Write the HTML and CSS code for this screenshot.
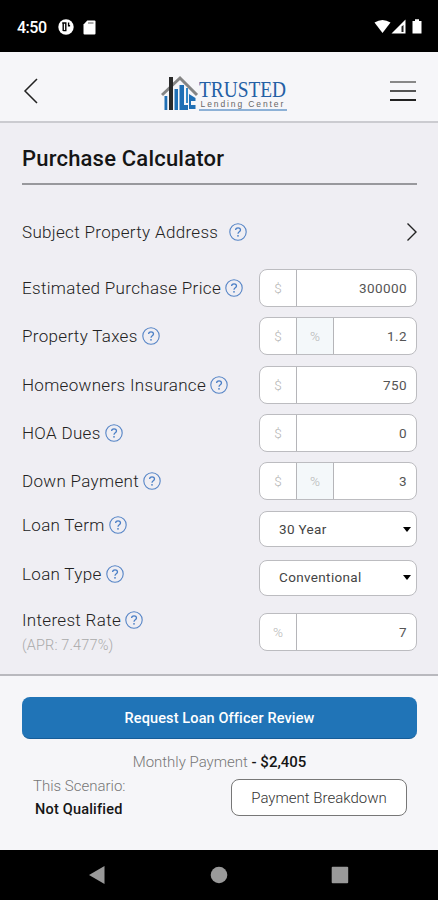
FILE: index.html
```html
<!DOCTYPE html>
<html lang="en">
<head>
<meta charset="utf-8">
<title>Purchase Calculator</title>
<link rel="stylesheet" href="styles.css">
</head>
<body>
<svg class="defs" width="0" height="0">
  <symbol id="help" viewBox="0 0 18 18">
    <circle cx="9" cy="9" r="8.2" fill="none" stroke="#5584c6" stroke-width="1.1"/>
    <path d="M6.6 7.1C6.6 4.2 11.5 4.1 11.5 7C11.5 8.8 9 8.8 9 10.7" fill="none" stroke="#4b7fc6" stroke-width="1.3"/>
    <circle cx="9" cy="12.8" r=".9" fill="#4b7fc6"/>
  </symbol>
</svg>
<div class="status">
  <span class="clock">4:50</span>
  <svg class="app-dot" width="16" height="16" viewBox="0 0 16 16"><circle cx="8" cy="8" r="7.7" fill="#fff"/><path d="M5.200 3.500v8.500M4.200 4h3.600v7.600H5.200M10.600 3.500v3.300h1.500" fill="none" stroke="#000" stroke-width="1.400"/></svg>
  <svg class="sd" width="13" height="15" viewBox="0 0 13 15"><path d="M4.3.5H11.500Q12.500.5 12.500 1.500V13.500Q12.500 14.500 11.500 14.500H1.500Q.5 14.500.5 13.500V4.500Z" fill="#fff"/><path d="M5 3h5.500" stroke="#777" stroke-width="1.200"/></svg>
  <svg class="signals" width="49" height="16" viewBox="0 0 49 16"><path d="M.5 3.500Q8.500-1.500 16.500 3.500L8.500 14Z" fill="#fff"/><path d="M17.500 14.500L31.500.5V14.500Z" fill="#fff"/><path d="M27.500 7.500V13h2V6z" fill="#222"/><path d="M38.500 2h2.500V.3h4V2h2.500v12.500h-9z" fill="#fff"/></svg>
</div>
<header class="bar">
  <svg class="back" width="16" height="28" viewBox="0 0 16 28"><path d="M14 2L2 14L14 26" fill="none" stroke="#222" stroke-width="1.500"/></svg>
  <div class="logo">
    <svg width="38" height="36" viewBox="0 0 38 36">
      <path d="M3.500 21h2.800v14H3.500zM13.500 14h3.500v21h-3.500zM18.500 10h4.500v20h4v5h-8.500zM28 19L34.500 23V26H30V30H34.500V34H28Z" fill="#1f6fb5"/>
      <path d="M9 18h2v17H9zM25 13h2v15h-2z" fill="#3487c5"/>
      <path d="M1 20L19 3L36 20" fill="none" stroke="#858585" stroke-width="3"/>
      <path d="M8 2H12V35H8Z" fill="#292929"/>
    </svg>
    <div class="wordmark"><span class="trusted">TRUSTED</span><span class="lending">Lending Center</span></div>
  </div>
  <div class="menu"><i></i><i></i><i></i></div>
</header>
<main class="page">
  <h1><span>Purchase Calculator</span></h1>
  <div class="address"><span class="t-address">Subject Property Address</span><svg class="help"><use href="#help"/></svg>
    <svg class="next" width="12" height="20" viewBox="0 0 12 20"><path d="M1.500 1.500L10 10L1.500 18.500" fill="none" stroke="#222" stroke-width="1.400"/></svg></div>
  <form class="fields">
    <div class="row"><label>Estimated Purchase Price</label><svg class="help"><use href="#help"/></svg><div class="box"><span class="unit">$</span><span class="value">300000</span></div></div>
    <div class="row"><label>Property Taxes</label><svg class="help"><use href="#help"/></svg><div class="box"><span class="unit">$</span><span class="unit on">%</span><span class="value">1.2</span></div></div>
    <div class="row"><label>Homeowners Insurance</label><svg class="help"><use href="#help"/></svg><div class="box"><span class="unit">$</span><span class="value">750</span></div></div>
    <div class="row"><label>HOA Dues</label><svg class="help"><use href="#help"/></svg><div class="box"><span class="unit">$</span><span class="value">0</span></div></div>
    <div class="row"><label>Down Payment</label><svg class="help"><use href="#help"/></svg><div class="box"><span class="unit">$</span><span class="unit on">%</span><span class="value">3</span></div></div>
    <div class="row pick"><div class="name"><label>Loan Term</label><svg class="help"><use href="#help"/></svg></div><div class="box select"><span>30 Year</span><i class="caret"></i></div></div>
    <div class="row pick"><div class="name"><label>Loan Type</label><svg class="help"><use href="#help"/></svg></div><div class="box select"><span>Conventional</span><i class="caret"></i></div></div>
    <div class="row rate"><div class="stack"><div class="name"><label>Interest Rate</label><svg class="help"><use href="#help"/></svg></div><span class="apr">(APR: 7.477%)</span></div><div class="box"><span class="unit">%</span><span class="value">7</span></div></div>
  </form>
</main>
<footer class="summary">
  <div class="request"><span>Request Loan Officer Review</span></div>
  <p class="monthly">Monthly Payment <b>- $2,405</b></p>
  <div class="result">
    <div class="scenario"><span class="s-label">This Scenario:</span><b>Not Qualified</b></div>
    <div class="breakdown"><span>Payment Breakdown</span></div>
  </div>
</footer>
<div class="system">
  <svg width="18" height="20" viewBox="0 0 18 20"><path d="M1 10L16.500 1V19Z" fill="#999"/></svg>
  <svg width="18" height="18" viewBox="0 0 18 18"><circle cx="9" cy="9" r="8.300" fill="#999"/></svg>
  <svg width="18" height="18" viewBox="0 0 18 18"><rect x=".7" y=".7" width="16.500" height="16.500" rx="1" fill="#999"/></svg>
</div>
</body>
</html>
```
FILE: styles.css
```css
* { box-sizing: border-box; }
body { margin: 0; width: 438px; height: 900px; overflow: hidden; display: flex; flex-direction: column; background: #efeef3; color: #333; font-family: Roboto, sans-serif; }
svg { display: block; flex: none; }
.defs { position: absolute; }
.status { height: 52px; flex: none; background: #000; color: #fff; display: flex; align-items: center; padding: 2px 14px 0 17px; }
.clock { font-size: 16px; font-weight: 500; width: 41px; letter-spacing: -.5px; }
.sd { margin-left: 9px; }
.signals { margin-left: auto; margin-right: 1px; }
.bar { height: 71px; flex: none; background: #f6f6f9; border-bottom: 2px solid #cbcbd0; display: flex; align-items: center; justify-content: space-between; padding: 8px 22px 0 23px; }
.logo { display: flex; width: 126px; height: 36px; margin: 4px 0 0 18px; }
.wordmark { width: 88px; margin-left: 0; padding-top: 5px; border-bottom: 2px solid #8db1d6; height: 36px; white-space: nowrap; }
.trusted { display: block; width: 104px; font: 22.500px/19px "Liberation Serif", serif; color: #245fa5; transform: scaleX(.86); transform-origin: 0 0; }
.lending { display: block; font: 8.500px/9px "Liberation Sans", sans-serif; color: #666; letter-spacing: 1.9px; margin: 1px 0 0 2px; }
.menu { width: 26px; display: grid; gap: 7px; }
.menu i { height: 2px; background: #222; }
.menu i:first-child { background: #888; }
.menu i:nth-child(2) { background: #555; }
.page { height: 551px; flex: none; padding: 0 21px 0 22px; }
h1 { margin: 0; height: 62px; border-bottom: 2px solid #98989c; font-size: 22px; line-height: 71px; font-weight: 500; color: #151515; letter-spacing: .2px; }
.address { height: 84px; padding-top: 10px; display: flex; align-items: center; font-size: 17px; font-weight: 300; }
.address .help { margin-left: 11px; }
.next { margin-left: auto; margin-right: -1px; }
.help { width: 18px; height: 18px; margin-left: 4px; }
.fields { display: grid; gap: 10.3px; }
.row { height: 38px; display: flex; align-items: center; font-size: 17px; }
label, .t-address { font-weight: 300; letter-spacing: .32px; white-space: nowrap; color: #222; }
.box { width: 158px; height: 38px; margin-left: auto; border: 1.500px solid #bcbcc0; border-radius: 8px; background: #fff; display: flex; overflow: hidden; align-items: stretch; font-size: 13.500px; line-height: 36px; flex: none; }
.unit { width: 37px; border-right: 1px solid #b5b5b9; color: #b5b5b5; font-weight: 300; text-align: center; }
.unit.on { background: #f4f8fa; }
.value { margin-left: auto; padding-right: 9px; letter-spacing: .4px; color: #555; }
.name { display: flex; align-items: center; }
.pick .name { padding-bottom: 8px; }
.select { height: 36px; align-items: center; justify-content: space-between; padding: 0 5px 0 19px; font-size: 13.500px; letter-spacing: .35px; color: #444; }
.select span { margin-top: -1px; }
.caret { border: 4.500px solid transparent; border-top: 5px solid #000; border-bottom: 0; }
.rate { margin-top: 6px; }
.stack { display: flex; flex-direction: column; gap: 7px; }
.apr { font-size: 14.500px; line-height: 18px; font-weight: 300; letter-spacing: .15px; color: #aaa; }
.summary { height: 176px; flex: none; background: #f6f6f9; border-top: 2px solid #b9b9be; padding: 21px 21px 0 22px; }
.request { height: 42px; border-radius: 8px; background: #2074b7; border-bottom: 1px solid #165d98; color: #fff; font-size: 14.500px; letter-spacing: .12px; font-weight: 500; display: grid; place-items: center; padding-top: 1px; }
.monthly { margin: 14px 0 0; font-size: 15px; line-height: 18px; font-weight: 300; text-align: center; color: #777; }
b { font-weight: 500; color: #151515; }
.result { display: flex; justify-content: space-between; padding: 8px 10px 0 11px; }
.scenario { display: flex; flex-direction: column; font-size: 15px; line-height: 24px; margin-top: -5px; }
.s-label { font-weight: 300; color: #777; }
.scenario b { margin-left: 2px; font-size: 14.500px; letter-spacing: .2px; }
.breakdown { width: 176px; height: 37px; border: 1.500px solid #777; border-radius: 8px; background: #fff; font-size: 15px; font-weight: 300; display: grid; place-items: center; }
.system { height: 50px; flex: none; background: #000; display: flex; align-items: center; justify-content: space-between; padding: 0 89px 0 88px; }
```
